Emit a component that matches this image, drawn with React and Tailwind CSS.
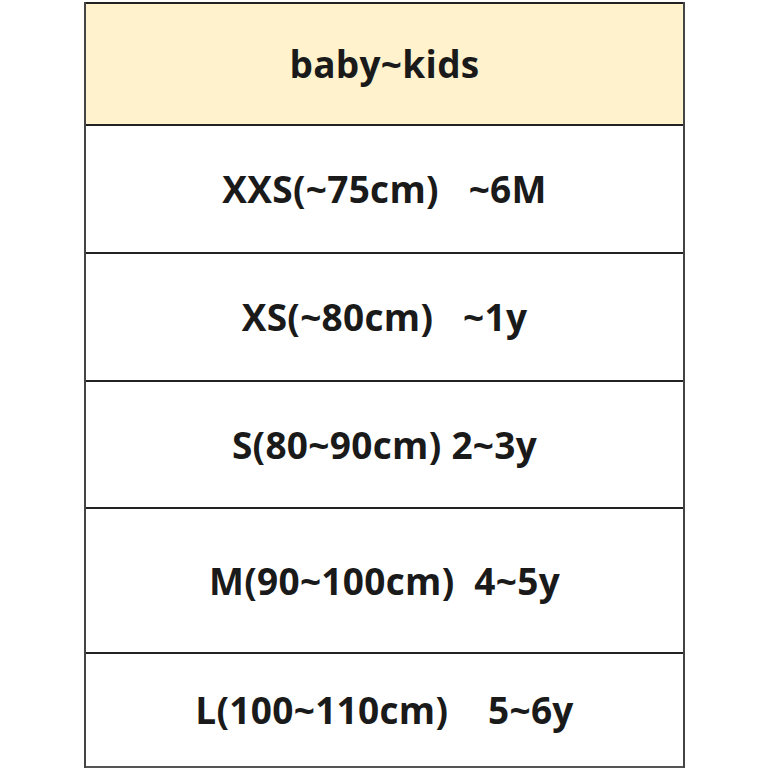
export default function App() {
  const rows = [
    { t: "XXS(~75cm)   ~6M", h: "h-[126px]" },
    { t: "XS(~80cm)   ~1y", h: "h-[126px]" },
    { t: "S(80~90cm) 2~3y", h: "h-[125px]" },
    { t: "M(90~100cm)  4~5y", h: "h-[143px]" },
    { t: "L(100~110cm)    5~6y", h: "h-[112px]" },
  ];
  return (
    <div className="w-[770px] h-[770px] bg-white pt-[2px] pl-[84px]">
      <div
        className="w-[601px] border-x-2 border-x-[#444] text-[#1a1a1a]"
        style={{ fontFamily: '"Open Sans", "Noto Sans", sans-serif' }}
      >
        <div className="h-[2px] bg-[#222]" />
        <div className="h-[120px] bg-[#fff2cc] flex items-center justify-center text-[37px] font-bold whitespace-pre tracking-[0.3px]">
          baby~kids
        </div>
        {rows.map((r, i) => (
          <div key={i}>
            <div className="h-[2px] bg-[#222]" />
            <div className={`${r.h} flex items-center justify-center text-[37px] font-bold whitespace-pre tracking-[0.3px]`}>
              {r.t}
            </div>
          </div>
        ))}
        <div className="h-[2px] bg-[#555]" />
      </div>
    </div>
  );
}
